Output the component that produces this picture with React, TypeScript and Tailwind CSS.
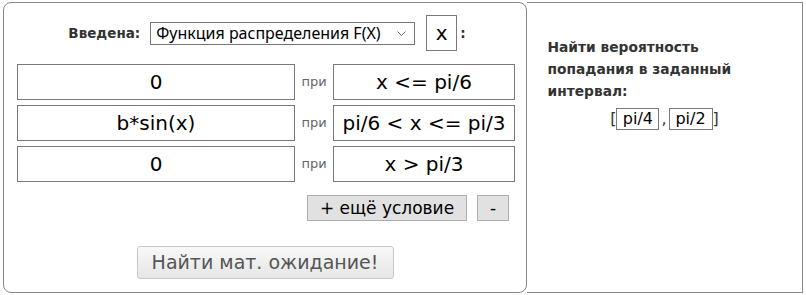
import React from "react";

const inputCls =
  "border border-[#7a7a7a] bg-white text-center text-black outline-none h-[36px] text-[20px] px-1";

function Row({ f, c }: { f: string; c: string }) {
  return (
    <div className="flex items-center h-[36px]">
      <input readOnly value={f} className={inputCls + " w-[278px]"} />
      <span className="w-[38px] text-center text-[13px] text-[#666]">при</span>
      <input readOnly value={c} className={inputCls + " w-[182px]"} />
    </div>
  );
}

export default function App() {
  return (
    <div
      className="flex pt-[2px] pl-[3px] bg-white"
      style={{ fontFamily: '"DejaVu Sans", Verdana, sans-serif' }}
    >
      <div className="w-[524px] h-[291px] border border-[#888] rounded-[8px] flex flex-col">
        <div className="flex items-center justify-center mt-[12px] h-[36px] pl-[4px]">
          <span className="text-[13.5px] font-bold text-[#333] mr-[10px]">Введена:</span>
          <div className="relative w-[265px] h-[23px] border border-[#767676] bg-white flex items-center">
            <span
              className="pl-[5px] text-[16px] text-black leading-none"
              style={{ fontFamily: '"Noto Sans", "Open Sans", sans-serif' }}
            >
              Функция распределения F(X)
            </span>
            <svg
              className="absolute right-[8px] top-[8px]"
              width="9"
              height="6"
              viewBox="0 0 9 6"
            >
              <path d="M0.5 0.5 L4.5 4.5 L8.5 0.5" fill="none" stroke="#666" strokeWidth="1" />
            </svg>
          </div>
          <div className="ml-[11px] w-[31px] h-[36px] border border-[#7a7a7a] flex items-center justify-center text-[20px] text-black">
            x
          </div>
          <span className="ml-[3px] text-[13.5px] font-bold text-[#333]">:</span>
        </div>

        <div className="flex flex-col gap-[5px] mt-[13px] pl-[13px]">
          <Row f="0" c="x <= pi/6" />
          <Row f="b*sin(x)" c="pi/6 < x <= pi/3" />
          <Row f="0" c="x > pi/3" />
        </div>

        <div className="flex justify-end mt-[13px] pr-[17px] gap-[10px]">
          <button className="w-[160px] h-[26px] bg-[#e1e1e1] border border-[#adadad] text-[17px] text-black leading-none">
            + ещё условие
          </button>
          <button className="w-[32px] h-[26px] bg-[#e1e1e1] border border-[#adadad] text-[17px] text-black leading-none">
            -
          </button>
        </div>

        <div className="flex justify-center mt-[25px]">
          <button className="w-[257px] h-[33px] rounded-[3px] border border-[#c8c8c8] bg-gradient-to-b from-[#f8f8f8] to-[#e6e6e6] text-[19px] text-[#555] leading-none">
            Найти мат. ожидание!
          </button>
        </div>
      </div>

      <div className="w-[276px] h-[291px] border-y border-r border-[#888] flex flex-col items-center">
        <div className="w-[276px] pl-[21px] pt-[33px]">
          <div className="w-[220px] text-[13.8px] font-bold text-[#333] leading-[22px]">
            Найти вероятность попадания в заданный интервал:
          </div>
        </div>
        <div className="flex items-center mt-[5px] text-[16px] text-[#333]">
          <span>[</span>
          <input
            readOnly
            value="pi/4"
            className="w-[43px] h-[22px] border border-[#7a7a7a] text-center text-[16px] text-black outline-none"
          />
          <span className="mx-[2px]">,</span>
          <input
            readOnly
            value="pi/2"
            className="w-[44px] h-[22px] border border-[#7a7a7a] text-center text-[16px] text-black outline-none"
          />
          <span>]</span>
        </div>
      </div>
    </div>
  );
}
